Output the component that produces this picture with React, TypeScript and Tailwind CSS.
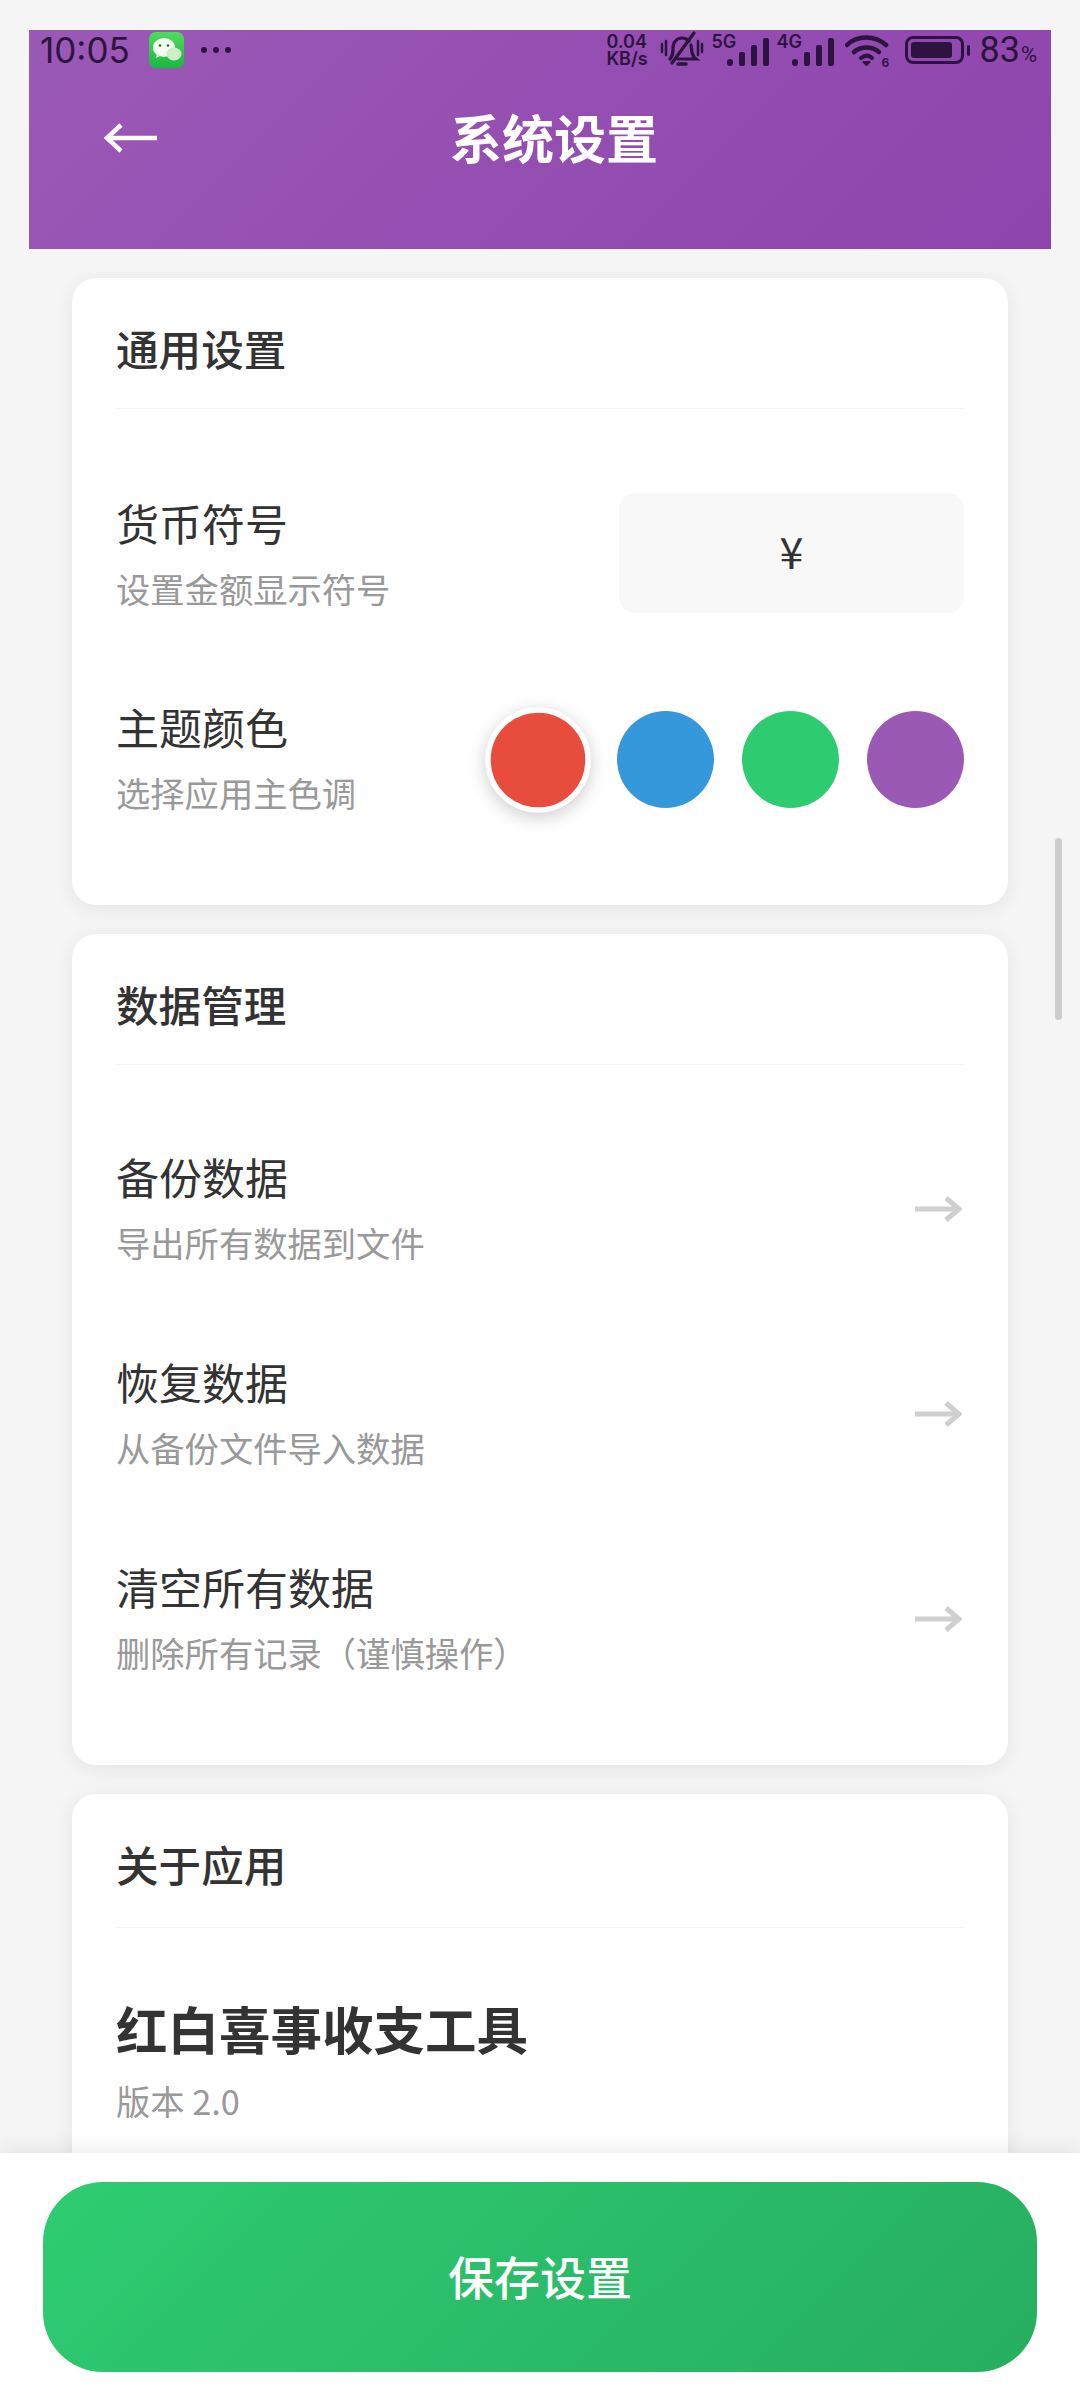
import React from 'react';

const SWATCHES = ['bg-[#3498db]', 'bg-[#2ecc71]', 'bg-[#9b59b6]'];

const DATA_ROWS = [
  { title: '备份数据', sub: '导出所有数据到文件' },
  { title: '恢复数据', sub: '从备份文件导入数据' },
  { title: '清空所有数据', sub: '删除所有记录（谨慎操作）' },
];

function WeChatIcon() {
  return (
    <svg width="35" height="36" viewBox="0 0 35 36" className="ml-[19px]">
      <defs>
        <linearGradient id="wx" x1="0" y1="0" x2="0" y2="1">
          <stop offset="0" stopColor="#4fdc5c" />
          <stop offset="1" stopColor="#18b83f" />
        </linearGradient>
      </defs>
      <rect width="35" height="36" rx="7" fill="url(#wx)" />
      <ellipse cx="15" cy="15.5" rx="11" ry="9.5" fill="#f1fbef" />
      <path d="M8 22l-1 4 6-3z" fill="#f1fbef" />
      <ellipse cx="25" cy="22" rx="7.5" ry="6.5" fill="#cdeec9" />
      <circle cx="11" cy="13.5" r="1.3" fill="#2a6e35" />
      <circle cx="19" cy="13.5" r="1.3" fill="#2a6e35" />
    </svg>
  );
}

function BellOff() {
  return (
    <svg width="44" height="38" viewBox="0 0 44 38" fill="none" stroke="#2d1440" strokeWidth="3.2" strokeLinecap="round">
      <path d="M10 28c3-3 3-6 3-11 0-6 4-10 9-10 3 0 5 1 7 3" />
      <path d="M31 14c1 6 0 10 5 14H18" />
      <path d="M18 33h8" strokeWidth="3.5" />
      <path d="M12 32L34 2" />
      <path d="M2 13v8M6 10v14M38 10v14M42 13v8" strokeWidth="2.5" />
    </svg>
  );
}

function Signal({ label }: { label: string }) {
  return (
    <div className="relative w-[58px] h-[36px]">
      <span className="absolute left-0 top-0 text-[18px] leading-[20px] font-semibold text-[#2d1440] font-['Inter',sans-serif]">{label}</span>
      <svg width="42" height="30" viewBox="0 0 42 30" className="absolute right-0 bottom-[1px]" fill="#2d1440">
        <rect x="0" y="22" width="6" height="7" rx="3" />
        <rect x="12" y="15" width="6" height="14" rx="2" />
        <rect x="24" y="8" width="6" height="21" rx="2" />
        <rect x="36" y="1" width="6" height="28" rx="2" />
      </svg>
    </div>
  );
}

function Wifi() {
  return (
    <div className="relative w-[46px] h-[36px]">
      <svg width="46" height="36" viewBox="0 0 46 36" fill="none" stroke="#2d1440" strokeWidth="4.5" strokeLinecap="round">
        <path d="M2 13C12 3 30 3 41 13" />
        <path d="M9 20c7-6 18-6 25 0" />
        <path d="M16 26c4-3 8-3 11 0" strokeWidth="4" />
        <path d="M21.5 33l-3-3h6z" fill="#2d1440" strokeWidth="2" strokeLinejoin="round" />
      </svg>
      <span className="absolute right-[2px] bottom-[-1px] text-[12px] leading-[12px] font-bold">6</span>
    </div>
  );
}

function Battery() {
  return (
    <div className="flex items-center gap-[3px]">
      <div className="w-[59px] h-[28px] rounded-[8px] border-[3px] border-[#2d1440] p-[3px]">
        <div className="w-[41px] h-full rounded-[3px] bg-[#2d1440]" />
      </div>
      <div className="w-[3px] h-[11px] rounded-full bg-[#2d1440]" />
    </div>
  );
}

function StatusBar() {
  return (
    <div className="absolute left-0 right-0 top-0 h-[40px] flex items-center text-[#2d1440] font-['Inter',sans-serif]">
      <span className="ml-[11px] text-[35px] leading-[40px]">10:05</span>
      <WeChatIcon />
      <div className="ml-[17px] flex gap-[6px]">
        <i className="w-[6px] h-[6px] rounded-full bg-[#2d1440]" />
        <i className="w-[6px] h-[6px] rounded-full bg-[#2d1440]" />
        <i className="w-[6px] h-[6px] rounded-full bg-[#2d1440]" />
      </div>
      <div className="ml-auto flex items-center pr-[14px]">
        <div className="w-[45px] flex flex-col items-start text-[18px] leading-[17px] font-semibold">
          <span>0.04</span>
          <span>KB/s</span>
        </div>
        <div className="ml-[9px]"><BellOff /></div>
        <div className="ml-[7px]"><Signal label="5G" /></div>
        <div className="ml-[7px]"><Signal label="4G" /></div>
        <div className="ml-[11px]"><Wifi /></div>
        <div className="ml-[14px]"><Battery /></div>
        <span className="ml-[9px] text-[36px] leading-[40px] font-['Roboto',sans-serif]">83</span>
        <span className="ml-[1px] text-[22px] leading-[20px] mt-[10px] font-['Roboto',sans-serif]">%</span>
      </div>
    </div>
  );
}

function Header() {
  return (
    <header className="relative h-[219px] bg-[linear-gradient(135deg,#9b59b6,#8e44ad)]">
      <StatusBar />
      <div className="flex items-center h-full pl-[74px]">
        <svg width="54" height="30" viewBox="0 0 54 30" fill="none" stroke="#fff" strokeWidth="4.5" className="mt-[-3px]">
          <path d="M3 15h51" />
          <path d="M18 2L4 15l14 13" />
        </svg>
        <h1 className="ml-[293px] mb-[5px] text-[52px] leading-none font-bold text-white">系统设置</h1>
      </div>
    </header>
  );
}

function ArrowRight() {
  return (
    <svg width="47" height="26" viewBox="0 0 47 26" fill="none" stroke="#cfcfcf" strokeWidth="5" className="mb-[5px] mr-[2px]">
      <path d="M0 13h44" />
      <path d="M31 2l13 11-13 11" />
    </svg>
  );
}

function Card({ title, children, className, headerPb = 'pb-[31px]' }: { title: string; children: React.ReactNode; className?: string; headerPb?: string }) {
  return (
    <section className={`bg-white rounded-[24px] px-[44px] shadow-[0_4px_20px_rgba(0,0,0,0.07)] ${className ?? ''}`}>
      <h2 className={`pt-[41px] ${headerPb} border-b border-[#f5f5f5] text-[42.6px] leading-[58px] font-medium text-[#333]`}>{title}</h2>
      {children}
    </section>
  );
}

function RowText({ title, sub }: { title: string; sub: string }) {
  return (
    <div className="pb-[11px]">
      <div className="text-[43px] leading-[58px] text-[#333]">{title}</div>
      <div className="mt-[14px] text-[34.3px] leading-[46px] text-[#999]">{sub}</div>
    </div>
  );
}

export default function App() {
  return (
    <div className="relative w-[1080px] h-[2401px] overflow-hidden bg-[#f5f5f5] font-['Noto_Sans_CJK_SC',sans-serif] pt-[30px]">
      <div className="mx-[29px]">
        <Header />
      </div>

      <main className="px-[72px] pt-[29px] flex flex-col gap-[29px]">
        <Card title="通用设置" className="pb-[42px]">
          <div className="pt-[46px]">
            <div className="h-[204px] flex items-center justify-between">
              <RowText title="货币符号" sub="设置金额显示符号" />
              <div className="w-[345px] h-[120px] mb-[8px] pb-[6px] rounded-[16px] bg-[#f8f8f8] flex items-center justify-center text-[43px] text-[#333]">¥</div>
            </div>
            <div className="h-[204px] flex items-center justify-between">
              <RowText title="主题颜色" sub="选择应用主色调" />
              <div className="flex items-center gap-[28px] mb-[3px]">
                <div className="w-[96px] h-[96px] mr-[3px] rounded-full bg-[#e74c3c] scale-110 border-[5px] border-white shadow-[0_4px_16px_rgba(0,0,0,0.2)]" />
                {SWATCHES.map((c) => (
                  <div key={c} className={`w-[97px] h-[97px] rounded-full ${c}`} />
                ))}
              </div>
            </div>
          </div>
        </Card>

        <Card title="数据管理" className="pb-[41px]">
          <div className="pt-[44px]">
            {DATA_ROWS.map((r) => (
              <div key={r.title} className="h-[205px] flex items-center justify-between">
                <RowText title={r.title} sub={r.sub} />
                <ArrowRight />
              </div>
            ))}
          </div>
        </Card>

        <Card title="关于应用" className="pb-[60px]" headerPb="pb-[34px]">
          <div className="pt-[65px] text-[51.5px] leading-[70px] font-bold text-[#333]">红白喜事收支工具</div>
          <div className="mt-[14px] text-[34.3px] leading-[46px] text-[#999]">版本 2.0</div>
        </Card>
      </main>

      {/* scroll indicator */}
      <div className="absolute left-[1055px] top-[838px] w-[7px] h-[182px] rounded-full bg-[#cccccc]" />

      {/* fixed save bar */}
      <footer className="absolute left-0 right-0 bottom-0 h-[248px] bg-white px-[43px] pt-[29px] shadow-[0_-4px_20px_rgba(0,0,0,0.08)]">
        <button className="w-full h-[190px] rounded-[60px] bg-[linear-gradient(135deg,#2ecc71,#27ae60)] text-white text-[46px] font-medium pb-[4px]">保存设置</button>
      </footer>
    </div>
  );
}
